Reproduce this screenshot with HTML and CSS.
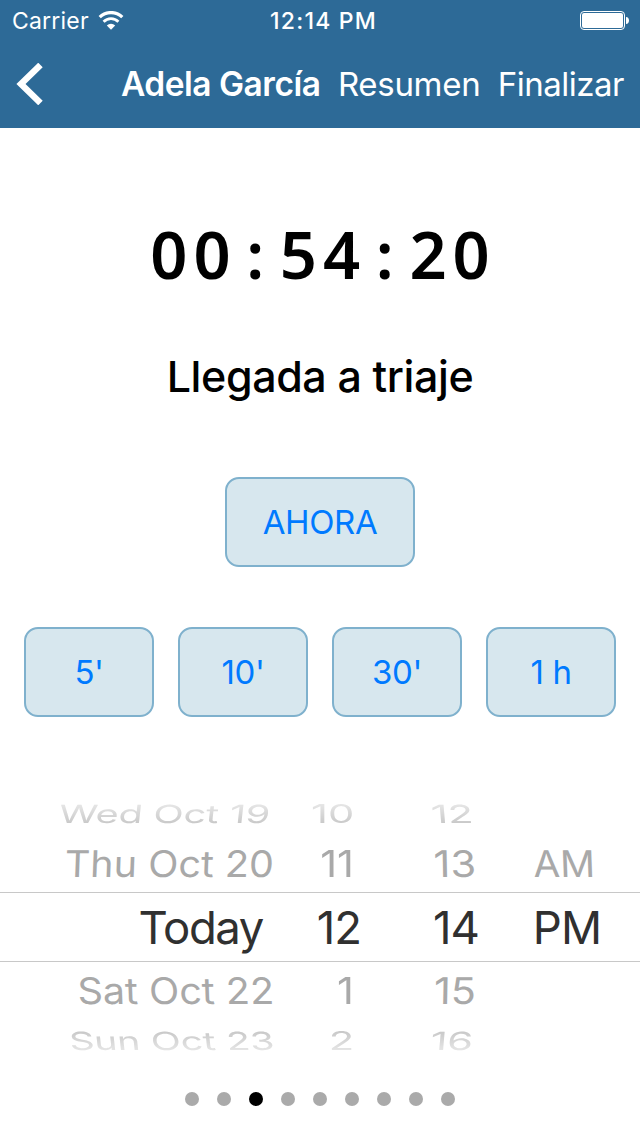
FILE: index.html
```
<!DOCTYPE html>
<html lang="es">
<head>
    <meta charset="utf-8">
    <title>Adela García</title>
    <link rel="stylesheet" href="styles.css">
</head>
<body>
<header class="header">
    <div class="status">
        <div class="status-left">
            <span class="carrier">Carrier</span>
            <svg class="wifi" width="26" height="20" viewBox="0 0 26 20">
                <path d="M1.7 6.2a16 16 0 0 1 22.6 0" fill="none" stroke="#fff" stroke-width="3.2"/>
                <path d="M5.6 10.7a10.4 10.4 0 0 1 14.8 0" fill="none" stroke="#fff" stroke-width="2.8"/>
                <path d="M13 18.8l-4.2-4.3a6 6 0 0 1 8.4 0z" fill="#fff"/>
            </svg>
        </div>
        <span class="clock">12:14 PM</span>
        <svg class="battery" width="49" height="19" viewBox="0 0 49 19">
            <rect x=".5" y=".5" width="44" height="18" rx="3.5" fill="none" stroke="#fff"/>
            <rect x="2" y="2" width="41" height="15" rx="2" fill="#fff"/>
            <path d="M46 6c4 0 4 7 0 7z" fill="#fff"/>
        </svg>
    </div>
    <div class="nav">
        <svg class="back" width="27" height="42" viewBox="0 0 27 42">
            <path d="M24.5 2L5 21L24.5 40" fill="none" stroke="#fff" stroke-width="6.4"/>
        </svg>
        <h1 class="title">Adela García</h1>
        <a class="link resumen">Resumen</a>
        <a class="link finalizar">Finalizar</a>
    </div>
</header>
<main>
    <div class="timer"><span>0</span><span>0</span><span>:</span><span>5</span><span>4</span><span>:</span><span>2</span><span>0</span></div>
    <h2 class="stage">Llegada a triaje</h2>
    <button class="btn now">AHORA</button>
    <div class="offsets">
        <button class="btn">5'</button>
        <button class="btn">10'</button>
        <button class="btn">30'</button>
        <button class="btn">1 h</button>
    </div>
    <div class="picker">
        <div class="row far top">
            <span>Wed Oct 19</span><span>10</span><span>12</span>
        </div>
        <div class="row near top">
            <span>Thu Oct 20</span><span>11</span><span>13</span><span>AM</span>
        </div>
        <div class="row selected">
            <span>Today</span><span>12</span><span>14</span><span>PM</span>
        </div>
        <div class="row near bottom">
            <span>Sat Oct 22</span><span>1</span><span>15</span>
        </div>
        <div class="row far bottom">
            <span>Sun Oct 23</span><span>2</span><span>16</span>
        </div>
    </div>
    <div class="dots">
        <i></i><i></i><i class="on"></i><i></i><i></i><i></i><i></i><i></i><i></i>
    </div>
</main>
</body>
</html>
```
FILE: styles.css
```
*{
    box-sizing: border-box;
}
body{
    margin: 0;
    width: 640px;
    height: 1136px;
    overflow: hidden;
    background: #fff;
    font-family: Inter, "Liberation Sans", sans-serif;
    color: #000;
}
h1, h2{
    margin: 0;
}
.header{
    height: 128px;
    background: #2d6a97;
    color: #fff;
}
.status{
    display: grid;
    grid-template-columns: 1fr auto 1fr;
    align-items: center;
    height: 40px;
    padding: 0 11px 0 12px;
    font-size: 23px;
}
.status-left{
    display: flex;
    align-items: center;
    gap: 9px;
    padding-top: 1px;
}
.carrier{
    letter-spacing: 0.2px;
}
.clock{
    padding: 1px 0 0 6px;
    font-weight: 500;
    letter-spacing: 1.2px;
}
.battery{
    justify-self: end;
}
.nav{
    display: flex;
    align-items: center;
    height: 88px;
    padding: 0 16px;
    white-space: nowrap;
}
.title{
    margin-left: 78px;
    width: 217px;
    font-size: 33.5px;
    font-weight: 600;
    letter-spacing: -0.5px;
}
.link{
    font-size: 33px;
    font-weight: 400;
    letter-spacing: -0.3px;
}
.resumen{
    width: 160px;
}
.finalizar{
    letter-spacing: -0.5px;
}
.timer{
    display: flex;
    justify-content: center;
    height: 96px;
    margin-top: 78px;
    font-family: "Noto Sans", sans-serif;
    font-size: 65px;
    font-weight: 600;
    line-height: 96px;
}
.timer span{
    width: 43.2px;
    text-align: center;
}
.stage{
    height: 60px;
    margin-top: 45px;
    font-size: 43px;
    font-weight: 500;
    letter-spacing: -0.4px;
    line-height: 58px;
    text-align: center;
}
.btn{
    display: block;
    width: 130px;
    height: 90px;
    padding: 0;
    border: 2px solid #7fb1cd;
    border-radius: 14px;
    background: #d7e7ee;
    color: #007aff;
    font-family: inherit;
    font-size: 33px;
    font-weight: 400;
    letter-spacing: -0.4px;
}
.now{
    width: 190px;
    margin: 70px auto 0;
}
.offsets{
    display: flex;
    justify-content: space-between;
    margin: 60px 24px 0;
}
.picker{
    margin-top: 72px;
    height: 277px;
}
.row{
    display: grid;
    height: 50px;
    line-height: 50px;
    text-align: right;
    white-space: nowrap;
}
.row span{
    display: block;
    transform-origin: 100% 50%;
}
.far{
    grid-template-columns: 270px 84px 119px;
    font-size: 39px;
    letter-spacing: -0.2px;
    color: #c8c8c8;
}
.far span{
    transform: scale(1.07, 0.64);
}
.far.top{
    -webkit-mask-image: linear-gradient(rgba(0,0,0,.45) 30%, #000 70%);
}
.far.bottom{
    grid-template-columns: 274px 80px 119px;
    -webkit-mask-image: linear-gradient(#000 30%, rgba(0,0,0,.45) 70%);
}
.near{
    grid-template-columns: 274px 80px 122px 119px;
    font-size: 39.5px;
    font-weight: 400;
    color: #a9a9a9;
}
.near span{
    transform: scale(1.05, 0.93);
}
.near.top{
    margin-bottom: 3px;
}
.near.bottom{
    margin-top: 4px;
}
.selected{
    grid-template-columns: 263px 98px 118px 122px;
    height: 70px;
    border-top: 1px solid #c8c8c8;
    border-bottom: 1px solid #c8c8c8;
    line-height: 70px;
    font-size: 45.5px;
    font-weight: 400;
    letter-spacing: -1px;
    color: #303030;
}
/* outer columns lean towards the middle of the wheel */
.top span:first-child{
    transform: scaleY(0.93) skewX(-2deg);
}
.bottom span:first-child{
    transform: scaleY(0.93) skewX(2deg);
}
.far.top span:first-child{
    transform: scale(1.015, 0.64) skewX(-4deg);
}
.far.bottom span:first-child{
    transform: scale(1.005, 0.64) skewX(4deg);
}
.top span:nth-child(3){
    transform: scale(1.05, 0.93) skewX(1deg);
}
.bottom span:nth-child(3){
    transform: scale(1.05, 0.93) skewX(-1deg);
}
.far.top span:nth-child(3){
    transform: scale(1.07, 0.64) skewX(3deg);
}
.far.bottom span:nth-child(3){
    transform: scale(1.07, 0.64) skewX(-3deg);
}
.near.top span:nth-child(4){
    transform: scale(0.98, 0.93) skewX(2deg);
}
.selected span:first-child{
    letter-spacing: -1.4px;
}
.dots{
    display: flex;
    justify-content: center;
    gap: 18px;
    margin-top: 26px;
}
.dots i{
    width: 14px;
    height: 14px;
    border-radius: 50%;
    background: #aaa;
}
.dots .on{
    background: #000;
}
```
